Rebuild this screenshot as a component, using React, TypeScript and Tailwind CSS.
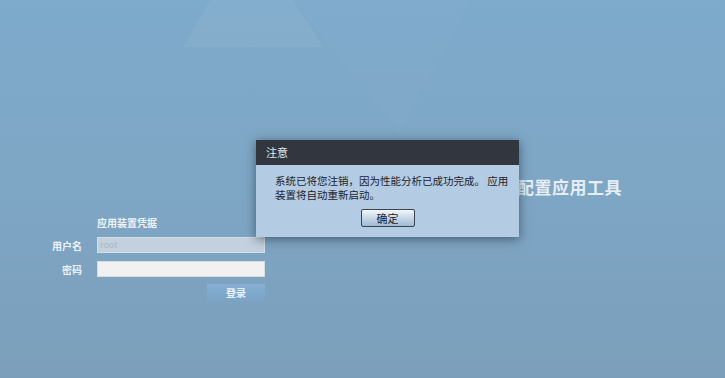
import React from 'react';

const cjk = { fontFamily: '"Noto Sans CJK SC", "Noto Sans", sans-serif' };

const Backdrop: React.FC = () => (
  <svg className="absolute inset-0 pointer-events-none" width="725" height="378" viewBox="0 0 725 378">
    <polygon points="183,47 210,0 293,0 323,47" fill="#ffffff" opacity="0.05" />
    <polygon points="293,0 400,133 470,0" fill="#ffffff" opacity="0.02" />
  </svg>
);

const NoticeDialog: React.FC = () => (
  <div className="absolute left-[256px] top-[140px] w-[263px] shadow-[0_2px_10px_rgba(20,30,45,0.55)]">
    <div className="h-[25px] bg-[#32373f] flex items-center pl-[10px] text-[11px] text-[#e4e8ee]">注意</div>
    <div className="bg-[#b3cbe3] pl-[19px] pt-[9px] pb-[9px] h-[72px]">
      <p className="w-[240px] text-[10.5px] leading-[14px] text-[#1c232c]">
        系统已将您注销，因为性能分析已成功完成。 应用装置将自动重新启动。
      </p>
      <div className="flex justify-center pr-[19px] mt-[7px]">
        <button className="w-[54px] h-[18px] rounded-[2px] border border-[#3a4450] bg-gradient-to-b from-[#f4f7fb] to-[#9fb8d2] text-[11px] leading-none text-[#1c232c]">
          确定
        </button>
      </div>
    </div>
  </div>
);

const LoginForm: React.FC = () => (
  <div className="pl-[40px]">
    <div className="pl-[57px] text-[10px] font-bold text-[#eef3f8] h-[15px] leading-[15px]">应用装置凭据</div>
    <div className="mt-[7px] grid grid-cols-[42px_168px] gap-x-[15px] gap-y-[8px] items-center">
      <span className="text-right text-[10px] font-bold text-[#eef3f8]">用户名</span>
      <div className="h-[16px] bg-[#c2d1dd] border border-[#d3dee7] flex items-center pl-[2px] text-[9px] text-[#a9b7c3]">root</div>
      <span className="text-right text-[10px] font-bold text-[#eef3f8]">密码</span>
      <div className="h-[16px] bg-[#f1f1f1] border border-[#d6dde3]" />
    </div>
    <div className="w-[225px] flex justify-end mt-[7px]">
      <button className="w-[58px] h-[17px] bg-gradient-to-b from-[#86b0d4] to-[#7aa3c6] text-[10px] font-bold text-[#e9f1f8] leading-none">
        登录
      </button>
    </div>
  </div>
);

const App: React.FC = () => (
  <div className="relative w-[725px] h-[378px] overflow-hidden bg-gradient-to-b from-[#7eaacb] via-[#7ea6c5] to-[#7b9fbb]" style={cjk}>
    <Backdrop />
    <div className="relative pt-[176px]">
      <div className="flex justify-end pr-[103px] h-[22px] items-center">
        <h1 className="text-[17px] font-bold text-[#e6edf4] tracking-[0.5px]">配置应用工具</h1>
      </div>
      <div className="mt-[17px]">
        <LoginForm />
      </div>
    </div>
    <NoticeDialog />
  </div>
);

export default App;
